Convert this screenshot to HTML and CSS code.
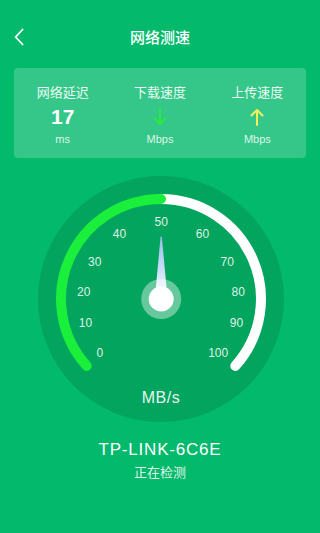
FILE: index.html
```html
<!DOCTYPE html>
<html lang="zh">
<head>
<meta charset="utf-8">
<title>网络测速</title>
<link rel="stylesheet" href="styles.css">
</head>
<body>
<div class="page">
  <header class="topbar">
    <span class="back">
      <svg width="12" height="18" viewBox="0 0 12 18"><path d="M8.6 1.5 L1.6 9 L8.6 16.5" fill="none" stroke="#fff" stroke-width="1.8" stroke-linecap="round" stroke-linejoin="round"/></svg>
    </span>
    <h1 class="title">网络测速</h1>
    <span class="spacer"></span>
  </header>

  <section class="stats">
    <div class="stat">
      <div class="stat-label">网络延迟</div>
      <div class="stat-value"><span class="num">17</span></div>
      <div class="stat-unit">ms</div>
    </div>
    <div class="stat">
      <div class="stat-label">下载速度</div>
      <div class="stat-value">
        <svg width="14" height="18" viewBox="0 0 14 18"><path d="M7 1 V16 M1.5 10.5 L7 16 L12.5 10.5" fill="none" stroke="#22ee3e" stroke-width="2" stroke-linecap="round" stroke-linejoin="round"/></svg>
      </div>
      <div class="stat-unit">Mbps</div>
    </div>
    <div class="stat">
      <div class="stat-label">上传速度</div>
      <div class="stat-value">
        <svg width="14" height="18" viewBox="0 0 14 18"><path d="M7 17 V2 M1.5 7.5 L7 2 L12.5 7.5" fill="none" stroke="#f4f05a" stroke-width="2" stroke-linecap="round" stroke-linejoin="round"/></svg>
      </div>
      <div class="stat-unit">Mbps</div>
    </div>
  </section>

  <div class="gauge">
    <svg class="gauge-svg" width="246" height="246" viewBox="0 0 246 246">
      <defs>
        <linearGradient id="needleGrad" x1="0" y1="0" x2="0" y2="1">
          <stop offset="0" stop-color="#98bcec"/>
          <stop offset="1" stop-color="#f6faff"/>
        </linearGradient>
      </defs>
      <circle cx="123" cy="123" r="123" fill="#02a45e"/>
      <path d="M123 23 A100 100 0 0 1 197.3 189.9" fill="none" stroke="#ffffff" stroke-width="10" stroke-linecap="round"/>
      <path d="M48.7 189.9 A100 100 0 0 1 123 23" fill="none" stroke="#1af03c" stroke-width="10" stroke-linecap="round"/>
      <g class="ticks">
        <text x="61.8" y="176.7">0</text>
        <text x="47.5" y="146.7">10</text>
        <text x="45.8" y="115.7">20</text>
        <text x="56.8" y="85.7">30</text>
        <text x="81.5" y="58.3">40</text>
        <text x="123.2" y="45.7">50</text>
        <text x="164.5" y="58.3">60</text>
        <text x="189.2" y="85.7">70</text>
        <text x="200.2" y="115.7">80</text>
        <text x="198.5" y="146.7">90</text>
        <text x="180.2" y="176.7">100</text>
      </g>
      <polygon points="122.6,60.5 123.8,60.5 129.4,121 117,121" fill="url(#needleGrad)"/>
      <circle cx="123.2" cy="123" r="20" fill="rgba(255,255,255,0.4)"/>
      <circle cx="123.2" cy="123" r="12.5" fill="#ffffff"/>
      <text class="unit" x="123" y="221">MB/s</text>
    </svg>
  </div>

  <div class="ssid">TP-LINK-6C6E</div>
  <div class="status">正在检测</div>
</div>
</body>
</html>
```

FILE: styles.css
```css
html, body {
  margin: 0;
  padding: 0;
}
body {
  background: #03b96c;
  font-family: "Liberation Sans", "Noto Sans CJK SC", sans-serif;
  color: #ffffff;
}
.page {
  width: 320px;
  height: 533px;
  overflow: hidden;
  display: flex;
  flex-direction: column;
  align-items: stretch;
}
.topbar {
  height: 68px;
  box-sizing: border-box;
  padding-top: 26px;
  display: grid;
  grid-template-columns: 44px 1fr 44px;
  align-items: start;
}
.back {
  display: flex;
  align-items: center;
  height: 22px;
  padding-left: 14px;
}
.back svg {
  display: block;
}
.title {
  margin: 0;
  text-align: center;
  font-family: "Noto Sans CJK SC", sans-serif;
  font-size: 15px;
  font-weight: 500;
  line-height: 22px;
  color: #ffffff;
}
.stats {
  margin: 0 14px;
  height: 90px;
  box-sizing: border-box;
  padding-top: 14px;
  border-radius: 4px;
  background: rgba(255, 255, 255, 0.2);
  display: grid;
  grid-template-columns: 1fr 1fr 1fr;
}
.stat {
  display: flex;
  flex-direction: column;
  align-items: center;
}
.stat-label {
  font-family: "Noto Sans CJK SC", sans-serif;
  font-size: 13px;
  line-height: 20px;
  color: rgba(255, 255, 255, 0.92);
}
.stat-value {
  margin-top: 1px;
  height: 28px;
  display: flex;
  align-items: center;
  justify-content: center;
}
.stat-value svg {
  display: block;
}
.num {
  font-family: "Liberation Sans", sans-serif;
  font-size: 21px;
  font-weight: 700;
  line-height: 28px;
  color: #ffffff;
}
.stat-unit {
  font-size: 11px;
  line-height: 16px;
  color: rgba(255, 255, 255, 0.85);
}
.gauge {
  margin-top: 18px;
  display: flex;
  justify-content: center;
  padding-left: 1px;
}
.gauge-svg {
  display: block;
}
.ticks text {
  font-family: "Liberation Sans", sans-serif;
  font-size: 12px;
  fill: rgba(255, 255, 255, 0.88);
  text-anchor: middle;
  dominant-baseline: central;
}
.unit {
  font-family: "Liberation Sans", sans-serif;
  font-size: 16px;
  letter-spacing: 0.5px;
  fill: rgba(255, 255, 255, 0.92);
  text-anchor: middle;
  dominant-baseline: central;
}
.ssid {
  margin-top: 16px;
  text-align: center;
  font-family: "Liberation Sans", sans-serif;
  font-size: 17px;
  letter-spacing: 0.8px;
  line-height: 24px;
  color: #ffffff;
}
.status {
  text-align: center;
  font-family: "Noto Sans CJK SC", sans-serif;
  font-size: 13px;
  line-height: 20px;
  color: rgba(255, 255, 255, 0.88);
}
```
